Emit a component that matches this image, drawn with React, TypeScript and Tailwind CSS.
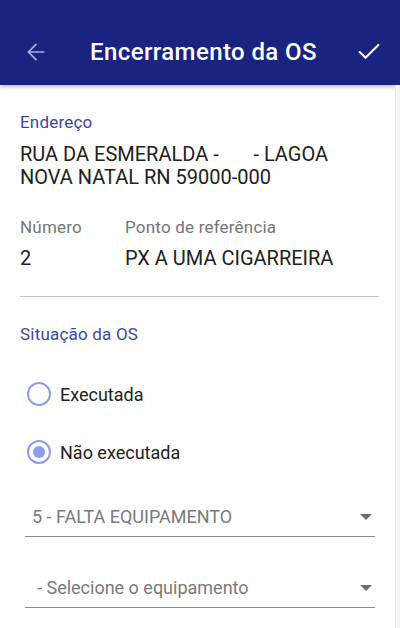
import { ArrowLeft, Check } from "lucide-react";

function Radio({ checked, label }: { checked: boolean; label: string }) {
  return (
    <div className="flex items-center h-[24px]">
      <span className="ml-[27px] w-[24px] h-[24px] rounded-full border-[2.5px] border-[#8c9cf0] flex items-center justify-center">
        {checked && <span className="w-[12px] h-[12px] rounded-full bg-[#8c9cf0]" />}
      </span>
      <span className="ml-[9px] text-[18px] text-[#212121]">{label}</span>
    </div>
  );
}

function Select({ value, indent }: { value: string; indent: string }) {
  return (
    <div className="mx-[25px] h-[40px] border-b-[1.5px] border-[#8a8a8a] flex items-center justify-between">
      <span className={`${indent} text-[18px] text-[#7a7a7a]`}>{value}</span>
      <span className="mr-[3px] w-0 h-0 border-l-[6px] border-r-[6px] border-t-[6px] border-l-transparent border-r-transparent border-t-[#6e6e6e]" />
    </div>
  );
}

export default function App() {
  return (
    <div
      className="w-[400px] h-[628px] bg-white overflow-hidden relative"
      style={{ fontFamily: "Roboto, 'Noto Sans', sans-serif" }}
    >
      {/* HEADER */}
      <header className="h-[85px] bg-[#1a2380] shadow-[0_2px_4px_rgba(0,0,0,0.25)] relative">
        <div className="h-[85px] flex items-center pt-[18px]">
          <ArrowLeft className="ml-[23px] w-[26px] h-[26px] text-[#a9aedb]" strokeWidth={1.6} />
          <h1 className="ml-[41px] text-[24px] font-medium text-white tracking-[0.4px]">
            Encerramento da OS
          </h1>
          <Check className="ml-auto mr-[17px] w-[28px] h-[28px] text-white" strokeWidth={1.8} />
        </div>
      </header>

      {/* ENDEREÇO */}
      <section className="px-[20px] pt-[27px]">
        <p className="text-[17px] text-[#3b47a6] leading-[20px] tracking-[0.2px]">Endereço</p>
        <p className="mt-[11px] text-[20px] text-[#212121] leading-[23px]">
          RUA DA ESMERALDA -{"\u00a0\u00a0\u00a0\u00a0\u00a0\u00a0\u00a0"}- LAGOA
          <br />
          NOVA NATAL RN 59000-000
        </p>

        <div className="mt-[28px] flex">
          <div className="w-[105px]">
            <p className="text-[17px] text-[#757575] leading-[20px] tracking-[0.2px]">Número</p>
            <p className="mt-[10px] text-[20px] text-[#212121] leading-[23px]">2</p>
          </div>
          <div>
            <p className="text-[17px] text-[#757575] leading-[20px] tracking-[0.2px]">Ponto de referência</p>
            <p className="mt-[10px] text-[20px] text-[#212121] leading-[23px]">PX A UMA CIGARREIRA</p>
          </div>
        </div>

        <div className="mt-[26px] mr-[1px] h-px bg-[#c4c4c4]" />

        <p className="mt-[27px] text-[17px] text-[#3b47a6] leading-[20px] tracking-[0.2px]">Situação da OS</p>
      </section>

      {/* RADIOS */}
      <div className="mt-[38px] flex flex-col gap-[34px]">
        <Radio checked={false} label="Executada" />
        <Radio checked={true} label="Não executada" />
      </div>

      {/* SELECTS */}
      <div className="mt-[33px] flex flex-col gap-[31px]">
        <Select value="5 - FALTA EQUIPAMENTO" indent="ml-[7px]" />
        <Select value="- Selecione o equipamento" indent="ml-[12px]" />
      </div>

      <div className="absolute right-0 top-[85px] bottom-0 w-[5px] bg-[#f4f4f4] border-l border-[#e6e6e6]" />
    </div>
  );
}
